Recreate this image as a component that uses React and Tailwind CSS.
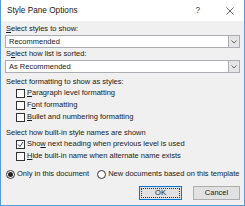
const font = { fontFamily: '"Liberation Sans", Arial, sans-serif' };

function Checkbox({ checked, children }) {
  return (
    <div className="flex h-[12px] items-center gap-[2px] pl-[11px]">
      <span className="flex h-[9px] w-[9px] shrink-0 items-center justify-center border border-[#333] bg-white">
        {checked && (
          <svg width="7" height="7" viewBox="0 0 7 7">
            <path d="M1 3.5 L3 5.5 L6 1" fill="none" stroke="#222" strokeWidth="0.9" />
          </svg>
        )}
      </span>
      <span className="whitespace-nowrap">{children}</span>
    </div>
  );
}

function Radio({ checked, children }) {
  return (
    <div className="flex items-center gap-[2px] whitespace-nowrap">
      <span className="flex h-[9px] w-[9px] shrink-0 items-center justify-center rounded-full border border-[#333] bg-white">
        {checked && <span className="h-[5px] w-[5px] rounded-full bg-[#222]" />}
      </span>
      <span>{children}</span>
    </div>
  );
}

function Select({ value }) {
  return (
    <div className="flex h-[13px] items-center border border-[#abadb3] bg-white pl-[3px]">
      <span className="flex-1">{value}</span>
      <span className="flex h-full w-[11px] items-center justify-center border-l border-[#abadb3] bg-[#e5e5e5]">
        <svg width="6" height="4" viewBox="0 0 6 4">
          <path d="M0.5 0.5 L3 3 L5.5 0.5" fill="none" stroke="#555" strokeWidth="0.9" />
        </svg>
      </span>
    </div>
  );
}

export default function App() {
  return (
    <div
      className="flex h-[206px] w-[245px] flex-col overflow-hidden border-x border-b border-[#5b9bd5] text-[7.5px] leading-[10px] text-[#1a1a1a]"
      style={font}
    >
      <div className="flex h-[21px] shrink-0 items-center bg-white pl-[6px] pr-[10px] text-[8.25px]">
        <span className="flex-1 text-[#222]">Style Pane Options</span>
        <span className="mr-[26px] text-[#444]">?</span>
        <svg width="8" height="8" viewBox="0 0 8 8">
          <path d="M0.5 0.5 L7.5 7.5 M7.5 0.5 L0.5 7.5" stroke="#444" strokeWidth="0.8" />
        </svg>
      </div>
      <div className="flex flex-1 flex-col bg-[#f0f0f0] pl-[4px] pr-[4px] pt-[3px]">
        <div className="h-[11px] pl-[1px]"><u>S</u>elect styles to show:</div>
        <Select value="Recommended" />
        <div className="flex h-[12px] items-center pl-[1px]">S<u>e</u>lect how list is sorted:</div>
        <Select value="As Recommended" />
        <div className="mt-[4px] h-[10px] pl-[1px]">Select formatting to show as styles:</div>
        <Checkbox><u>P</u>aragraph level formatting</Checkbox>
        <Checkbox>F<u>o</u>nt formatting</Checkbox>
        <Checkbox><u>B</u>ullet and numbering formatting</Checkbox>
        <div className="mt-[5px] h-[10px] pl-[1px]">Select how built-in style names are shown</div>
        <Checkbox checked>Sho<u>w</u> next heading when previous level is used</Checkbox>
        <Checkbox><u>H</u>ide built-in name when alternate name exists</Checkbox>
        <div className="mt-[6px] flex h-[12px] items-center gap-[8px] pl-[1px]">
          <Radio checked>Only in this document</Radio>
          <Radio>New documents based on this template</Radio>
        </div>
        <div className="mt-[6px] flex justify-end gap-[11px]">
          <button className="h-[14px] w-[43px] border border-[#0078d7] bg-[#e1e1e1] p-[1px]">
            <span className="flex h-full w-full items-center justify-center border border-dotted border-[#333]">OK</span>
          </button>
          <button className="flex h-[14px] w-[47px] items-center justify-center border border-[#adadad] bg-[#e1e1e1]">
            Cancel
          </button>
        </div>
      </div>
    </div>
  );
}
